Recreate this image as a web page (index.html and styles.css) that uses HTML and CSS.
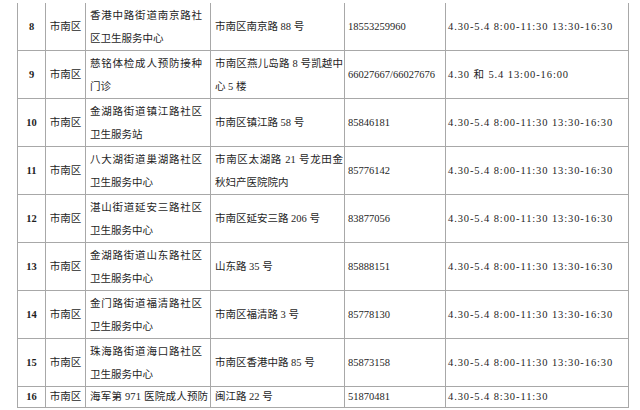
FILE: index.html
```html
<!DOCTYPE html>
<html lang="zh-CN">
<head>
<meta charset="utf-8">
<title>接种点</title>
<link rel="stylesheet" href="styles.css">
</head>
<body>
<table class="sites">
  <colgroup>
    <col class="c-no"><col class="c-area"><col class="c-name"><col class="c-addr"><col class="c-tel"><col class="c-time">
  </colgroup>
  <tbody>
    <tr>
      <td class="no">8</td><td class="area">市南区</td>
      <td class="name">香港中路街道南京路社区卫生服务中心</td>
      <td class="addr">市南区南京路 88 号</td>
      <td class="tel">18553259960</td>
      <td class="time">4.30-5.4 8:00-11:30 13:30-16:30</td>
    </tr>
    <tr>
      <td class="no">9</td><td class="area">市南区</td>
      <td class="name">慈铭体检成人预防接种门诊</td>
      <td class="addr">市南区燕儿岛路 8 号凯越中心 5 楼</td>
      <td class="tel">66027667/66027676</td>
      <td class="time">4.30 和 5.4 13:00-16:00</td>
    </tr>
    <tr>
      <td class="no">10</td><td class="area">市南区</td>
      <td class="name">金湖路街道镇江路社区卫生服务站</td>
      <td class="addr">市南区镇江路 58 号</td>
      <td class="tel">85846181</td>
      <td class="time">4.30-5.4 8:00-11:30 13:30-16:30</td>
    </tr>
    <tr>
      <td class="no">11</td><td class="area">市南区</td>
      <td class="name">八大湖街道巢湖路社区卫生服务中心</td>
      <td class="addr">市南区太湖路 21 号龙田金秋妇产医院院内</td>
      <td class="tel">85776142</td>
      <td class="time">4.30-5.4 8:00-11:30 13:30-16:30</td>
    </tr>
    <tr>
      <td class="no">12</td><td class="area">市南区</td>
      <td class="name">湛山街道延安三路社区卫生服务中心</td>
      <td class="addr">市南区延安三路 206 号</td>
      <td class="tel">83877056</td>
      <td class="time">4.30-5.4 8:00-11:30 13:30-16:30</td>
    </tr>
    <tr>
      <td class="no">13</td><td class="area">市南区</td>
      <td class="name">金湖路街道山东路社区卫生服务中心</td>
      <td class="addr">山东路 35 号</td>
      <td class="tel">85888151</td>
      <td class="time">4.30-5.4 8:00-11:30 13:30-16:30</td>
    </tr>
    <tr>
      <td class="no">14</td><td class="area">市南区</td>
      <td class="name">金门路街道福清路社区卫生服务中心</td>
      <td class="addr">市南区福清路 3 号</td>
      <td class="tel">85778130</td>
      <td class="time">4.30-5.4 8:00-11:30 13:30-16:30</td>
    </tr>
    <tr>
      <td class="no">15</td><td class="area">市南区</td>
      <td class="name">珠海路街道海口路社区卫生服务中心</td>
      <td class="addr">市南区香港中路 85 号</td>
      <td class="tel">85873158</td>
      <td class="time">4.30-5.4 8:00-11:30 13:30-16:30</td>
    </tr>
    <tr class="last">
      <td class="no">16</td><td class="area">市南区</td>
      <td class="name single">海军第 971 医院成人预防</td>
      <td class="addr">闽江路 22 号</td>
      <td class="tel">51870481</td>
      <td class="time">4.30-5.4 8:30-11:30</td>
    </tr>
  </tbody>
</table>
</body>
</html>
```

FILE: styles.css
```css
html, body {
  margin: 0;
  padding: 0;
  background: #ffffff;
}

body {
  padding-top: 3px;
  padding-left: 17px;
  font-family: "Liberation Serif", "Noto Sans CJK SC", serif;
  font-size: 10.5px;
  color: #1e1e1e;
}

.sites {
  table-layout: fixed;
  width: 612px;
  border-collapse: separate;
  border-spacing: 0;
  border-left: 1px solid #a8a8a8;
}

.c-no { width: 28px; }
.c-area { width: 40px; }
.c-name { width: 125px; }
.c-addr { width: 134px; }
.c-tel { width: 101px; }
.c-time { width: 183px; }

.sites td {
  height: 47px;
  padding: 0;
  line-height: 23px;
  vertical-align: middle;
  border-right: 1px solid #a8a8a8;
  border-bottom: 1px solid #a8a8a8;
  overflow: hidden;
}

.sites .last td {
  height: 20px;
  line-height: 20px;
}

.no {
  text-align: center;
  font-weight: bold;
}

.area {
  text-align: center;
}

.sites td.name {
  padding: 0 8px 0 4px;
  text-align: justify;
}

.sites td.name.single {
  padding-right: 0;
  white-space: nowrap;
  letter-spacing: 0.2px;
}

.sites td.addr {
  padding: 0 1px 0 4px;
  text-align: justify;
}

.sites td.tel {
  padding: 0 0 0 3px;
}

.sites td.time {
  padding: 0 0 0 2px;
  letter-spacing: 0.9px;
  word-spacing: 0;
  white-space: nowrap;
}
```
